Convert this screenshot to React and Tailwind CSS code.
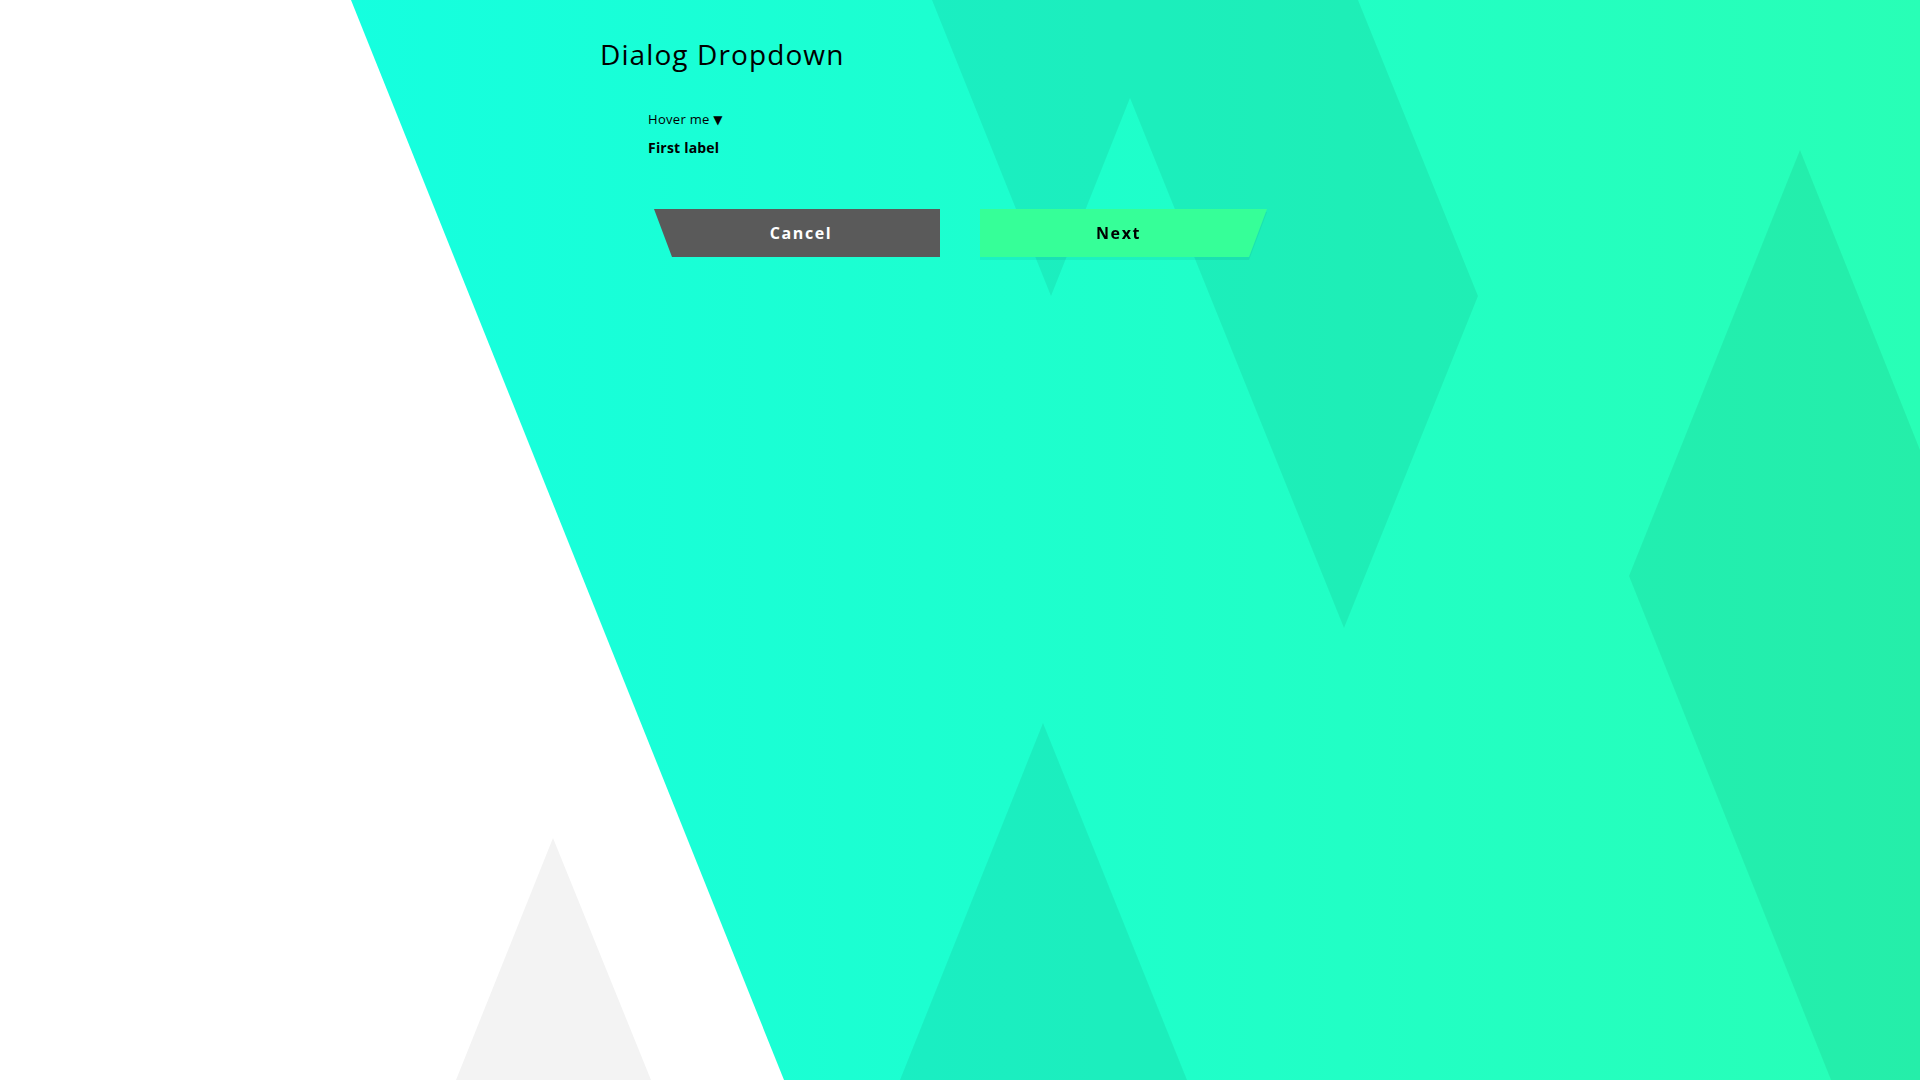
export default function App() {
  return (
    <div className="relative w-full h-[1080px] overflow-hidden bg-white font-['Open_Sans',sans-serif] text-black">
      <svg
        className="absolute inset-0 w-full h-full"
        viewBox="0 0 1920 1080"
        preserveAspectRatio="none"
      >
        <defs>
          <linearGradient id="bg" x1="351" y1="0" x2="1920" y2="0" gradientUnits="userSpaceOnUse">
            <stop offset="0" stopColor="#15ffdf" />
            <stop offset="1" stopColor="#28ffb6" />
          </linearGradient>
        </defs>
        <polygon points="553,838 456,1080 651,1080" fill="#f3f3f3" />
        <polygon points="351,0 1920,0 1920,1080 784,1080" fill="url(#bg)" />
        <polygon points="932,0 1051,296 1130,98 1344,628 1478,296 1358,0" fill="#000" fillOpacity="0.065" />
        <polygon points="1043,723 900,1080 1187,1080" fill="#000" fillOpacity="0.065" />
        <polygon points="1800,150 1629,576 1831,1080 1920,1080 1920,450" fill="#000" fillOpacity="0.065" />
      </svg>

      <div className="relative ml-[600px] pt-[37px] w-[700px]">
        <h1 className="text-[28px] leading-[34px] tracking-[1.1px] font-normal">Dialog Dropdown</h1>

        <div className="pl-[48px] pt-[35px]">
          <button className="text-[13px] leading-[16px] tracking-[0.3px] cursor-pointer">
            Hover me <span className="font-['DejaVu_Sans',sans-serif] text-[12px]">▼</span>
          </button>
          <div className="pt-[9px] text-[14px] leading-[18px] font-bold tracking-[0.2px]">First label</div>
        </div>

        <div className="flex gap-[40px] pl-[54px] pt-[52px]">
          <button className="w-[286px] h-[48px] pl-[8px] bg-[#5a5a5a] text-white text-[16px] font-bold tracking-[1.6px] [clip-path:polygon(0_0,100%_0,100%_100%,18px_100%)]">
            Cancel
          </button>
          <div className="drop-shadow-[0_3px_0_rgba(0,0,0,0.05)]">
            <button className="w-[287px] h-[48px] pr-[10px] bg-[#36ff98] text-black text-[16px] font-bold tracking-[1.6px] [clip-path:polygon(0_0,100%_0,calc(100%-18px)_100%,0_100%)]">
              Next
            </button>
          </div>
        </div>
      </div>
    </div>
  );
}
